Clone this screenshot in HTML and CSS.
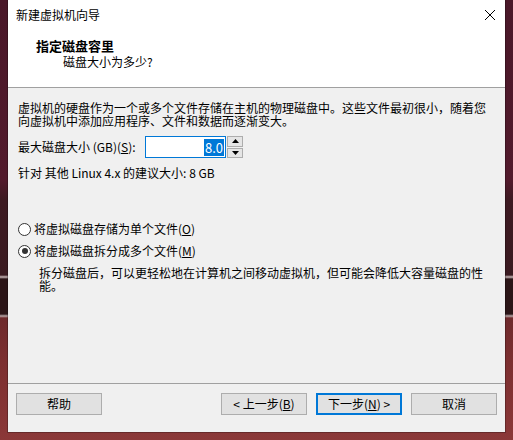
FILE: index.html
```html
<!DOCTYPE html>
<html lang="zh-CN">
<head>
<meta charset="utf-8">
<title>新建虚拟机向导</title>
<link rel="stylesheet" href="styles.css">
</head>
<body>
<div class="desktop">
  <div class="window">
    <div class="titlebar">
      <span class="title-text">新建虚拟机向导</span>
      <svg class="close" width="12" height="12" viewBox="0 0 12 12"><path d="M1 1 L11 11 M11 1 L1 11" stroke="#000" stroke-width="1" fill="none"/></svg>
    </div>
    <div class="header">
      <div class="h-title">指定磁盘容里</div>
      <div class="h-sub">磁盘大小为多少?</div>
    </div>
    <div class="content">
      <p class="para">虚拟机的硬盘作为一个或多个文件存储在主机的物理磁盘中。这些文件最初很小，随着您向虚拟机中添加应用程序、文件和数据而逐渐变大。</p>
      <div class="size-row">
        <label class="size-label">最大磁盘大小 (GB)(<u>S</u>):</label>
        <div class="input-box"><span class="sel">8.0</span></div>
        <div class="spinner">
          <div class="spin-btn"><svg width="7" height="4" viewBox="0 0 7 4"><path d="M3.5 0 L7 4 L0 4 Z" fill="#000"/></svg></div>
          <div class="spin-btn"><svg width="7" height="4" viewBox="0 0 7 4"><path d="M0 0 L7 0 L3.5 4 Z" fill="#000"/></svg></div>
        </div>
      </div>
      <div class="recommend">针对 其他 Linux 4.x 的建议大小: 8 GB</div>
      <div class="radio-row first">
        <span class="radio"></span>
        <span>将虚拟磁盘存储为单个文件(<u>O</u>)</span>
      </div>
      <div class="radio-row second">
        <span class="radio checked"></span>
        <span>将虚拟磁盘拆分成多个文件(<u>M</u>)</span>
      </div>
      <p class="desc">拆分磁盘后，可以更轻松地在计算机之间移动虚拟机，但可能会降低大容量磁盘的性能。</p>
    </div>
    <div class="footer">
      <button class="btn">帮助</button>
      <div class="spacer"></div>
      <button class="btn">&lt; 上一步(<u>B</u>)</button>
      <button class="btn default">下一步(<u>N</u>) &gt;</button>
      <button class="btn">取消</button>
    </div>
  </div>
</div>
</body>
</html>
```

FILE: styles.css
```css
html, body {
  margin: 0;
  padding: 0;
}
body {
  width: 513px;
  height: 440px;
  overflow: hidden;
  font-family: "Noto Sans CJK SC", "Noto Sans", sans-serif;
  font-size: 12px;
  color: #000;
}
.desktop {
  width: 513px;
  height: 440px;
  background: linear-gradient(to bottom,
    #4a1829 0px, #521a2c 180px, #3d1a22 200px, #3a1a20 275px,
    #c8b8b8 277px, #2b1517 279px, #2b1517 314px, #b8a8a8 316px,
    #6e2a2c 318px, #7c2f30 360px, #8b3838 440px);
  padding-left: 8px;
  box-sizing: border-box;
}
.window {
  width: 497px;
  height: 432px;
  background: #f0f0f0;
  display: flex;
  flex-direction: column;
  box-shadow: 0 0 0 1px rgba(0,0,0,0.25);
}
.titlebar {
  height: 30px;
  background: #fff;
  display: flex;
  align-items: center;
  padding: 0 9px 0 8px;
  line-height: 14px;
}
.title-text {
  flex: 1;
  margin-top: -1px;
}
.close {
  display: block;
  margin-top: -1px;
}
.header {
  height: 57px;
  background: #fff;
  border-bottom: 1px solid #a0a0a0;
  padding-left: 28px;
}
.h-title {
  font-size: 13px;
  font-weight: bold;
  line-height: 16px;
  margin-top: 8px;
}
.h-sub {
  padding-left: 27px;
  line-height: 16px;
  margin-top: 0;
}
.content {
  flex: 1;
  padding: 13px 10px 0 10px;
}
.para {
  margin: 0;
  width: 474px;
  line-height: 13px;
}
.size-row {
  margin-top: 9px;
  height: 22px;
  display: flex;
  align-items: center;
}
.size-label {
  width: 127px;
  line-height: 14px;
}
.input-box {
  width: 78px;
  height: 20px;
  border: 1px solid #0078d7;
  background: #fff;
  display: flex;
  justify-content: flex-end;
  align-items: center;
  padding-right: 1px;
  box-sizing: content-box;
}
.sel {
  background: #0078d7;
  color: #fff;
  font-size: 13px;
  line-height: 17px;
  padding: 0 1px 0 1px;
}
.spinner {
  margin-left: 1px;
  width: 16px;
  height: 22px;
  display: flex;
  flex-direction: column;
  gap: 1px;
  background: #f0f0f0;
}
.spin-btn {
  flex: 1;
  border: 1px solid #adadad;
  background: #e5e5e5;
  display: flex;
  align-items: center;
  justify-content: center;
}
.spin-btn svg {
  display: block;
}
.recommend {
  margin-top: 8px;
  line-height: 13px;
}
.radio-row {
  display: flex;
  align-items: center;
  height: 16px;
  line-height: 16px;
}
.radio-row.first {
  margin-top: 42px;
}
.radio-row.second {
  margin-top: 6px;
}
.radio {
  width: 11px;
  height: 11px;
  border: 1px solid #333;
  border-radius: 50%;
  background: #fff;
  margin-right: 3px;
  position: relative;
  flex: none;
}
.radio.checked::after {
  content: "";
  position: absolute;
  left: 2.5px;
  top: 2.5px;
  width: 6px;
  height: 6px;
  border-radius: 50%;
  background: #333;
}
.desc {
  margin: 7px 0 0 21px;
  width: 450px;
  line-height: 13px;
}
.footer {
  height: 39px;
  border-top: 1px solid #a0a0a0;
  display: flex;
  align-items: flex-start;
  padding: 9px 8px 0 8px;
  gap: 9px;
}
.spacer {
  flex: 1;
}
.btn {
  width: 86px;
  height: 22px;
  margin: 0;
  padding: 0;
  border: 1px solid #adadad;
  background: #e1e1e1;
  font-family: "Noto Sans CJK SC", "Noto Sans", sans-serif;
  font-size: 12px;
  line-height: 14px;
  color: #000;
  box-sizing: border-box;
}
.btn.default {
  border: 2px solid #0078d7;
}
u {
  text-decoration: underline;
}
```
